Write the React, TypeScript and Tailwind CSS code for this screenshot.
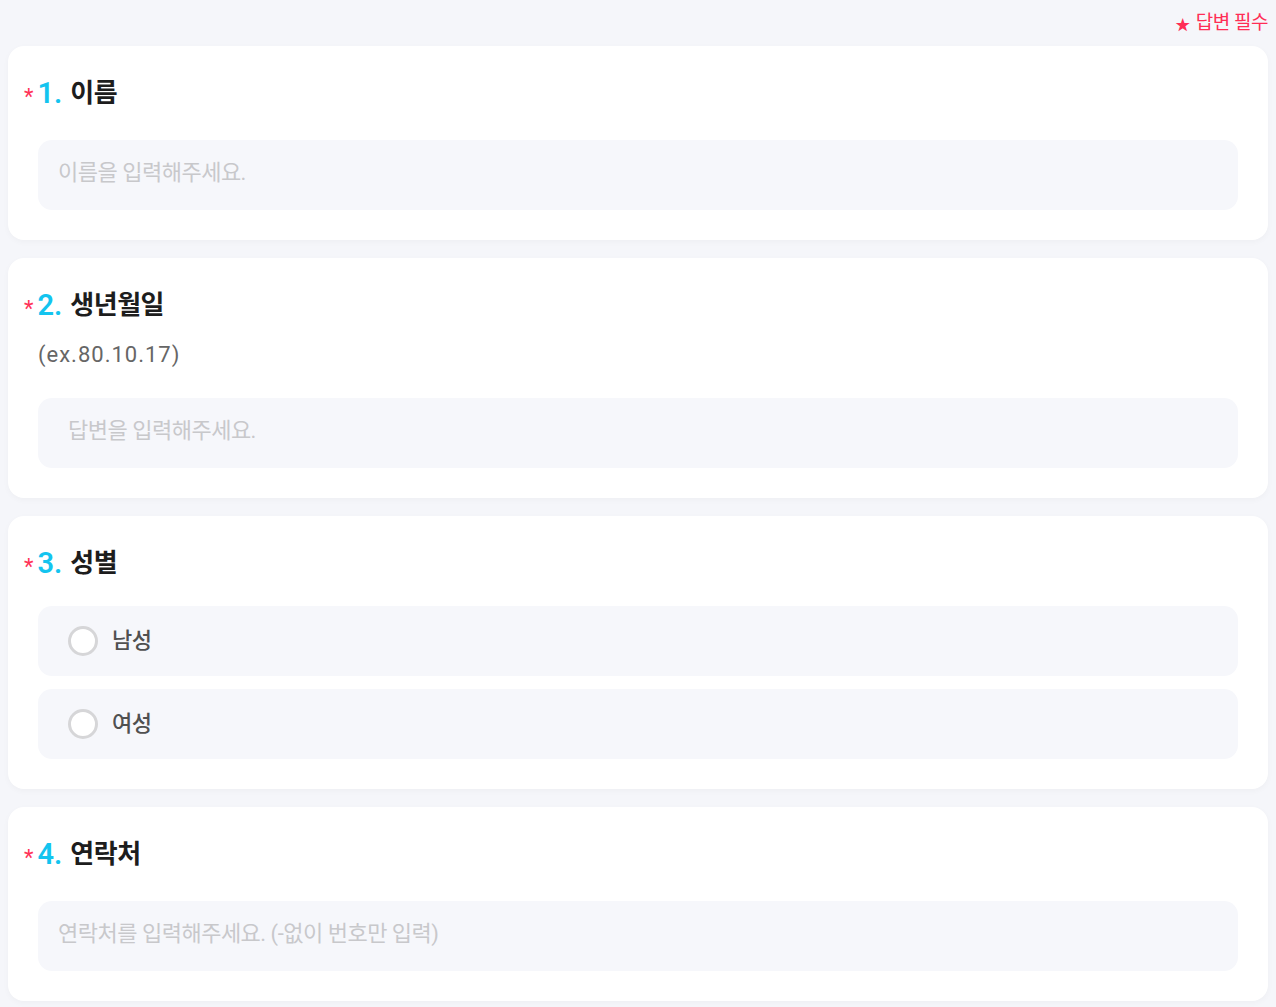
const font = { fontFamily: '"Roboto", "Noto Sans CJK KR", sans-serif' };

function Title({ num, label }: { num: string; label: string }) {
  return (
    <div className="flex items-center h-[34px] pl-[2px]">
      <span className="text-[#ff3358] text-[22px] leading-none mt-[8px] mr-[4px]">*</span>
      <span className="text-[#13c4ef] text-[29px] font-semibold leading-none">{num}</span>
      <span className="ml-[8px] text-[#1d1d1d] text-[26px] font-bold tracking-[-0.5px] leading-none">
        {label}
      </span>
    </div>
  );
}

function Input({ placeholder, pad = "px-5" }: { placeholder: string; pad?: string }) {
  return (
    <input
      type="text"
      placeholder={placeholder}
      className={`w-full h-[70px] rounded-[14px] bg-[#f6f7fb] ${pad} pb-[5px] text-[22px] tracking-[-0.5px] outline-none placeholder:text-[#c8c8cb]`}
    />
  );
}

function Radio({ label }: { label: string }) {
  return (
    <label className="flex items-center h-[70px] rounded-[14px] bg-[#f6f7fb] pl-[30px] gap-[14px] cursor-pointer">
      <span className="w-[30px] h-[30px] rounded-full border-[3px] border-[#d6d6d8] bg-white" />
      <span className="text-[22px] text-[#505050] font-medium tracking-[-0.5px] pb-[2px]">{label}</span>
    </label>
  );
}

export default function App() {
  return (
    <div className="min-h-screen bg-[#f5f6fa] px-2 pb-2" style={font}>
      <div className="h-[46px] flex items-center justify-end gap-[6px] text-[#ff2d55] text-[19px] tracking-[-0.5px]">
        <span className="text-[15px] mt-[4px]">★</span>
        <span>답변 필수</span>
      </div>
      <div className="flex flex-col gap-[18px]">
        <div className="bg-white rounded-[16px] shadow-[0_2px_6px_rgba(0,0,0,0.03)] px-[14px] pt-[30px] pb-[30px]">
          <Title num="1." label="이름" />
          <div className="mt-[30px] px-[16px]">
            <Input placeholder="이름을 입력해주세요." />
          </div>
        </div>

        <div className="bg-white rounded-[16px] shadow-[0_2px_6px_rgba(0,0,0,0.03)] px-[14px] pt-[30px] pb-[30px]">
          <Title num="2." label="생년월일" />
          <div className="mt-[22px] px-[16px] text-[22px] tracking-[1px] text-[#666] leading-none">(ex.80.10.17)</div>
          <div className="mt-[32px] px-[16px]">
            <Input placeholder="답변을 입력해주세요." pad="px-[30px]" />
          </div>
        </div>

        <div className="bg-white rounded-[16px] shadow-[0_2px_6px_rgba(0,0,0,0.03)] px-[14px] pt-[30px] pb-[30px]">
          <Title num="3." label="성별" />
          <div className="mt-[26px] px-[16px] flex flex-col gap-[13px]">
            <Radio label="남성" />
            <Radio label="여성" />
          </div>
        </div>

        <div className="bg-white rounded-[16px] shadow-[0_2px_6px_rgba(0,0,0,0.03)] px-[14px] pt-[30px] pb-[30px]">
          <Title num="4." label="연락처" />
          <div className="mt-[30px] px-[16px]">
            <Input placeholder="연락처를 입력해주세요. (-없이 번호만 입력)" />
          </div>
        </div>
      </div>
    </div>
  );
}
